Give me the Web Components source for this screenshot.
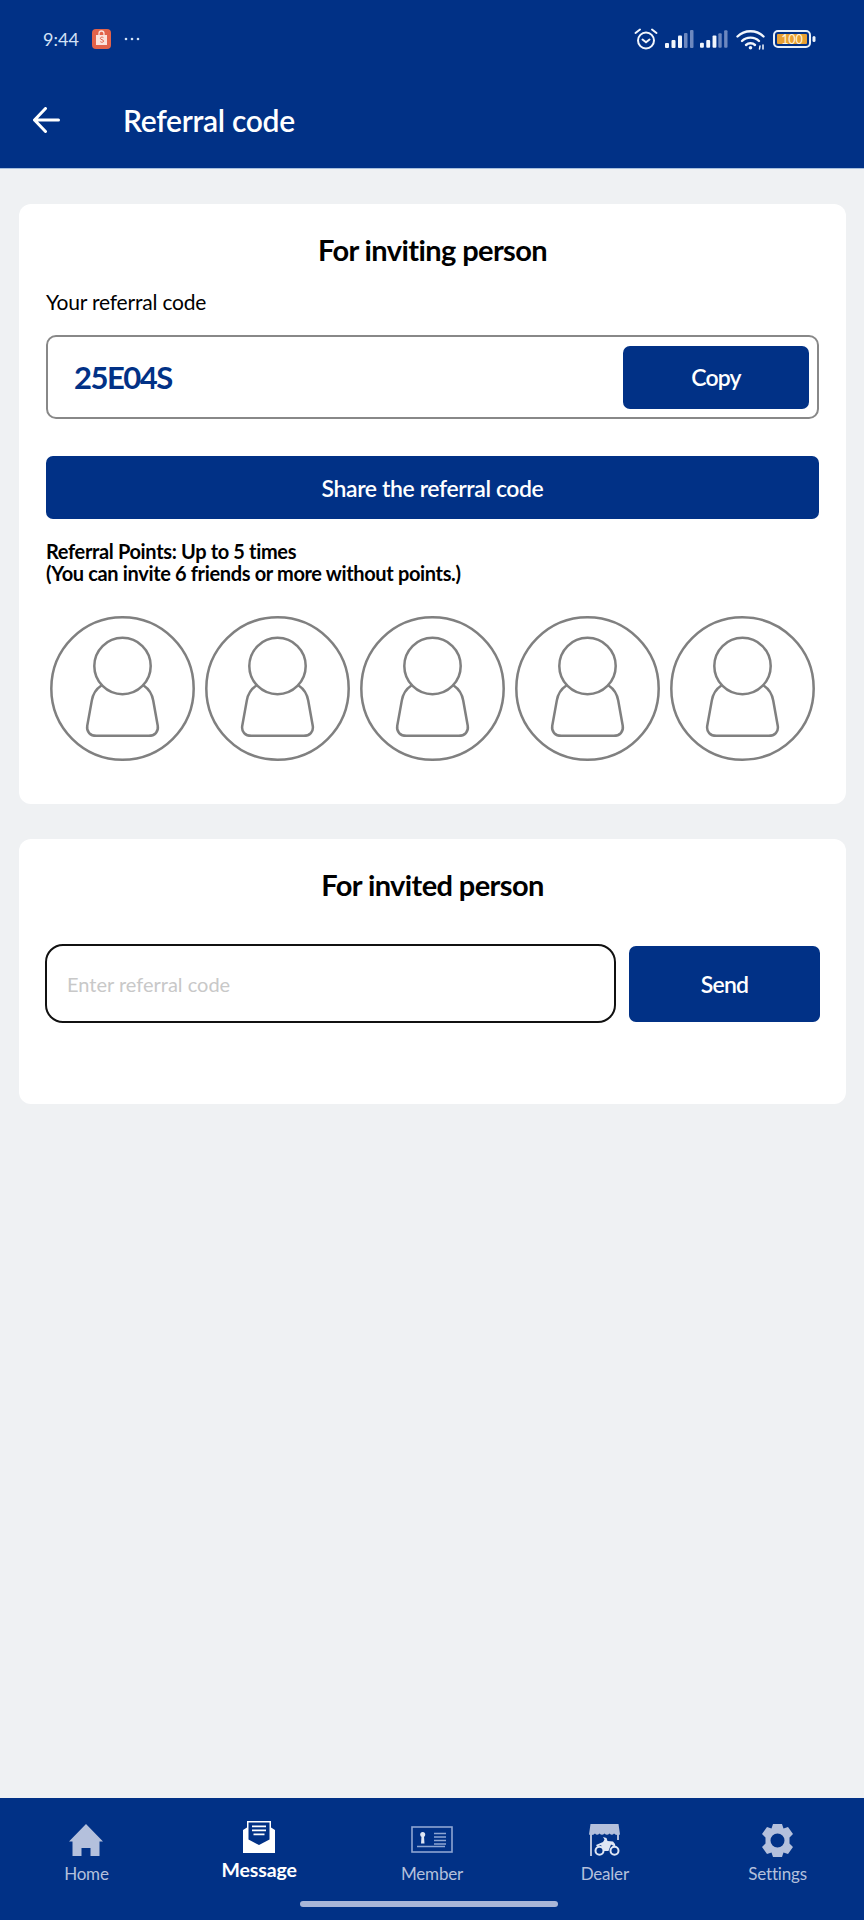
<!DOCTYPE html>
<html>
<head>
<meta charset="utf-8">
<title>Referral code</title>
<style>
  html, body { margin: 0; padding: 0; height: 100%; }
  body {
    width: 864px;
    height: 1920px;
    display: flex;
    flex-direction: column;
    background: #eff1f3;
    font-family: Lato, "Open Sans", sans-serif;
    overflow: hidden;
  }
</style>
</head>
<body>
  <x-app-header title-text="Referral code"></x-app-header>
  <x-page-main>
    <x-inviting-card></x-inviting-card>
    <x-invited-card></x-invited-card>
  </x-page-main>
  <x-bottom-nav></x-bottom-nav>

<script>
const BLUE = '#013186';

class StatusBar extends HTMLElement {
  constructor() {
    super();
    this.attachShadow({ mode: 'open' });
    this.shadowRoot.innerHTML = `
      <style>
        :host { display: flex; align-items: center; height: 24px; padding: 27px 48px 0 43px; color: #d3e2f6; }
        .time { font-size: 18px; line-height: 24px; width: 49px; }
        .dots { margin-left: 13px; display: block; }
        .right { margin-left: auto; display: flex; align-items: center; }
        svg { display: block; }
      </style>
      <span class="time">9:44</span>
      <svg width="19" height="20" viewBox="0 0 19 20">
        <rect width="19" height="20" y="0" rx="4" fill="#e2634a"/>
        <path d="M4 6h11v10H4z" fill="#fbe3dc"/>
        <path d="M7 6V4.500a2.500 2.500 0 0 1 5 0V6" fill="none" stroke="#fbe3dc" stroke-width="1.300"/>
        <path d="M11.400 8.600c-1-.8-3-.6-3 .8 0 1.600 3.200 1 3.200 2.700 0 1.400-2.200 1.500-3.300.6" fill="none" stroke="#e2634a" stroke-width="1"/>
      </svg>
      <svg class="dots" width="16" height="4" viewBox="0 0 16 4" fill="#d3e2f6">
        <circle cx="2" cy="2" r="1.300"/><circle cx="8" cy="2" r="1.300"/><circle cx="14" cy="2" r="1.300"/>
      </svg>
      <div class="right">
        <svg width="24" height="22" viewBox="0 0 24 22" fill="none" stroke="#f2f6fc" stroke-width="2" stroke-linecap="round">
          <circle cx="12" cy="12.500" r="8"/>
          <path d="M8.500 11.500l3.500 2.800 3.500-2.800"/>
          <path d="M1.500 5L6 1.500M22.500 5L18 1.500"/>
        </svg>
        <svg style="margin-left:7px" width="29" height="18" viewBox="0 0 29 18">
          <rect x="0" y="13" width="4" height="5" rx="1" fill="#f2f6fc"/>
          <rect x="6.500" y="10" width="4" height="8" rx="1" fill="#f2f6fc"/>
          <rect x="13" y="5.500" width="4" height="12.500" rx="1" fill="#f2f6fc"/>
          <rect x="19" y="3" width="3.500" height="15" rx="1" fill="#6d88bf"/>
          <rect x="25" y="0" width="3.500" height="18" rx="1" fill="#6d88bf"/>
        </svg>
        <svg style="margin-left:6px" width="28" height="18" viewBox="0 0 29 18">
          <rect x="0" y="13" width="4" height="5" rx="1" fill="#f2f6fc"/>
          <rect x="6.500" y="10" width="4" height="8" rx="1" fill="#f2f6fc"/>
          <rect x="13" y="5.500" width="4" height="12.500" rx="1" fill="#f2f6fc"/>
          <rect x="19" y="3" width="3.500" height="15" rx="1" fill="#6d88bf"/>
          <rect x="25" y="0" width="3.500" height="18" rx="1" fill="#6d88bf"/>
        </svg>
        <svg style="margin-left:8px" width="29" height="21" viewBox="0 0 29 21" fill="none" stroke="#f2f6fc" stroke-width="2.400" stroke-linecap="round">
          <path d="M1.500 7.500C8.500 .5 20.500 .5 27.500 7.500"/>
          <path d="M6 12C10.500 7.500 18.500 7.500 23 12"/>
          <path d="M10 16c2.500-2.300 6.500-2.300 9 0"/>
          <circle cx="14.500" cy="18.800" r="1.800" fill="#f2f6fc" stroke="none"/>
          <path d="M23.500 20l.5-3M27 20v-4" stroke-width="1.500"/>
        </svg>
        <svg style="margin-left:8px" width="43" height="18" viewBox="0 0 43 18">
          <rect x="1" y="1" width="36" height="16" rx="4" fill="none" stroke="#eaf1fa" stroke-width="2"/>
          <rect x="4" y="4" width="30" height="10" rx="1" fill="#e8a033"/>
          <text x="19" y="13.500" text-anchor="middle" font-family="Lato, sans-serif" font-size="12.500" fill="#fff3d6">100</text>
          <rect x="39.500" y="6" width="3" height="6" rx="1.500" fill="#eaf1fa"/>
        </svg>
      </div>`;
  }
}
customElements.define('x-status-bar', StatusBar);

class AppHeader extends HTMLElement {
  constructor() {
    super();
    this.attachShadow({ mode: 'open' });
    this.shadowRoot.innerHTML = `
      <style>
        :host { display: block; height: 168px; background: ${BLUE}; border-bottom: 1px solid #a6bedd; color: #fff; }
        .bar { display: flex; align-items: center; height: 50px; margin-top: 44px; padding-left: 33px; }
        .back { display: block; }
        h1 { margin: 0 0 0 63px; font-size: 30px; font-weight: 600; letter-spacing: -.3px; line-height: 50px; }
      </style>
      <x-status-bar></x-status-bar>
      <div class="bar">
        <svg class="back" width="27" height="26" viewBox="0 0 27 26" fill="none" stroke="#fff" stroke-width="3" stroke-linecap="round" stroke-linejoin="round">
          <path d="M1.500 13H25.500M12.500 1.500L1.500 13l11 11.500"/>
        </svg>
        <h1></h1>
      </div>`;
    this.shadowRoot.querySelector('h1').textContent = this.getAttribute('title-text');
  }
}
customElements.define('x-app-header', AppHeader);

class PageMain extends HTMLElement {
  constructor() {
    super();
    this.attachShadow({ mode: 'open' });
    this.shadowRoot.innerHTML = `
      <style>
        :host { display: flex; flex-direction: column; gap: 35px; flex: 1; padding: 35px 18px 0 19px; }
      </style>
      <slot></slot>`;
  }
}
customElements.define('x-page-main', PageMain);

class BlueButton extends HTMLElement {
  constructor() {
    super();
    this.attachShadow({ mode: 'open' });
    this.shadowRoot.innerHTML = `
      <style>
        :host { display: flex; align-items: center; justify-content: center; background: ${BLUE}; color: #fff; border-radius: 7px; font-size: var(--btn-size, 23px); letter-spacing: var(--btn-spacing, -.8px); font-weight: 600; cursor: pointer; }
      </style>
      <slot></slot>`;
  }
}
customElements.define('x-blue-button', BlueButton);

class AvatarSlot extends HTMLElement {
  constructor() {
    super();
    this.attachShadow({ mode: 'open' });
    this.shadowRoot.innerHTML = `
      <style>
        :host { display: block; width: 145px; height: 145px; }
        svg { display: block; }
      </style>
      <svg width="145" height="145" viewBox="0 0 144 144" fill="none" stroke="#808080" stroke-width="2.500" stroke-linecap="round">
        <circle cx="72" cy="72" r="70.700"/>
        <circle cx="72" cy="49.700" r="28"/>
        <path d="M51 69C45 73 42.500 78 41.500 84L37 109C36 115 40 119 46 119H98C104 119 108 115 107 109L102.500 84C101.500 78 99 73 93 69"/>
      </svg>`;
  }
}
customElements.define('x-avatar-slot', AvatarSlot);

class InvitingCard extends HTMLElement {
  constructor() {
    super();
    this.attachShadow({ mode: 'open' });
    this.shadowRoot.innerHTML = `
      <style>
        :host { display: block; background: #fff; border-radius: 12px; padding: 28px 27px 43px; color: #000; }
        h2 { margin: 0; font-size: 29px; line-height: 36px; font-weight: 700; letter-spacing: -.6px; text-align: center; }
        .label { margin-top: 20px; font-size: 21px; line-height: 28px; letter-spacing: -.2px; }
        .code-box { box-sizing: border-box; display: flex; align-items: center; justify-content: space-between; height: 84px; margin-top: 19px; padding: 0 8px 0 26px; border: 2px solid #888; border-radius: 10px; }
        .code { font-size: 31px; font-weight: 700; letter-spacing: -1.5px; color: ${BLUE}; }
        .copy { width: 186px; height: 63px; }
        .share { height: 63px; margin-top: 37px; --btn-size: 23px; --btn-spacing: -.4px; }
        .points { margin-top: 21px; font-size: 20px; line-height: 22px; font-weight: 700; letter-spacing: -.35px; }
        .avatars { display: flex; gap: 10px; margin-top: 32px; padding-left: 4px; }
      </style>
      <h2>For inviting person</h2>
      <div class="label">Your referral code</div>
      <div class="code-box">
        <span class="code">25E04S</span>
        <x-blue-button class="copy">Copy</x-blue-button>
      </div>
      <x-blue-button class="share">Share the referral code</x-blue-button>
      <div class="points">Referral Points: Up to 5 times<br>(You can invite 6 friends or more without points.)</div>
      <div class="avatars">
        <x-avatar-slot></x-avatar-slot>
        <x-avatar-slot></x-avatar-slot>
        <x-avatar-slot></x-avatar-slot>
        <x-avatar-slot></x-avatar-slot>
        <x-avatar-slot></x-avatar-slot>
      </div>`;
  }
}
customElements.define('x-inviting-card', InvitingCard);

class InvitedCard extends HTMLElement {
  constructor() {
    super();
    this.attachShadow({ mode: 'open' });
    this.shadowRoot.innerHTML = `
      <style>
        :host { display: block; background: #fff; border-radius: 12px; padding: 28px 26px 81px; color: #000; }
        h2 { margin: 0; font-size: 29px; line-height: 36px; font-weight: 700; letter-spacing: -.6px; text-align: center; }
        .row { display: flex; align-items: center; gap: 13px; margin-top: 41px; }
        .field { box-sizing: border-box; width: 571px; height: 79px; padding: 0 20px; border: 2px solid #111; border-radius: 18px; font: inherit; font-size: 20px; outline: none; background: #fff; }
        .field::placeholder { color: #c8c8c8; opacity: 1; }
        .send { width: 191px; height: 76px; }
      </style>
      <h2>For invited person</h2>
      <div class="row">
        <input class="field" type="text" placeholder="Enter referral code">
        <x-blue-button class="send">Send</x-blue-button>
      </div>`;
  }
}
customElements.define('x-invited-card', InvitedCard);

class NavItem extends HTMLElement {
  constructor() {
    super();
    this.attachShadow({ mode: 'open' });
    const active = this.hasAttribute('active');
    this.shadowRoot.innerHTML = `
      <style>
        :host { display: flex; flex-direction: column; align-items: center; flex: 1; color: #b4c0dc; font-size: 17px; letter-spacing: -.2px; }
        :host([active]) { color: #fff; font-size: 19.500px; font-weight: 700; letter-spacing: -.1px; }
        .icon { display: flex; align-items: flex-end; justify-content: center; height: 34px; margin-top: ${active ? 21 : 24}px; }
        .text { line-height: 24px; margin-top: ${active ? 5 : 6}px; }
      </style>
      <div class="icon"><slot name="icon"></slot></div>
      <div class="text"><slot></slot></div>`;
  }
}
customElements.define('x-nav-item', NavItem);

class BottomNav extends HTMLElement {
  constructor() {
    super();
    this.attachShadow({ mode: 'open' });
    this.shadowRoot.innerHTML = `
      <style>
        :host { display: block; height: 122px; background: ${BLUE}; }
        .items { display: flex; height: 103px; }
        .handle { width: 258px; height: 6px; margin: 0 auto; border-radius: 3px; background: #a9b6d8; transform: translateX(-3px); }
        svg { display: block; }
      </style>
      <div class="items">
        <x-nav-item>
          <svg slot="icon" width="34" height="32" viewBox="0 0 34 32" fill="#b4c0dc">
            <path d="M17 0L34 17.500H30.500V32H21.500V24H12.500V32H3.500V17.500H0Z"/>
          </svg>
          Home
        </x-nav-item>
        <x-nav-item active>
          <svg slot="icon" width="32" height="32" viewBox="0 0 32 32">
            <path fill="#fff" d="M4 0H28V6.500L32 9V32H0V9L4 6.500Z"/>
            <path fill="${BLUE}" d="M5.500 1.500H26.500V18.500L16 24L5.500 18.500Z"/>
            <path fill="#fff" d="M9 4.500H23V6.300H9ZM9 8.500H23V10.300H9ZM10.500 12.500H21.500V14.300H10.500Z"/>
          </svg>
          Message
        </x-nav-item>
        <x-nav-item>
          <svg slot="icon" style="margin-bottom:3px" width="42" height="27" viewBox="0 0 42 27" fill="none" stroke="#8ea6d3" stroke-width="1.600">
            <rect x="1" y="1" width="40" height="25"/>
            <path d="M6 20.500H34M23 7.500H35M23 11H35M23 14.500H35M23 18H35" stroke-width="1.300"/>
            <circle cx="11.700" cy="8.500" r="2.500" fill="#dfe6f4" stroke="none"/>
            <path d="M10.500 10H13L13.500 17.500H10Z" fill="#dfe6f4" stroke="none"/>
          </svg>
          Member
        </x-nav-item>
        <x-nav-item>
          <svg slot="icon" width="31" height="32" viewBox="0 0 31 32">
            <path fill="#b4c0dc" d="M1.500 0H29.500L31 10.500Q27.500 12 25 9.500Q23 12 20.500 9.500Q18 12 15.500 9.500Q13 12 10.500 9.500Q8 12 6 9.500Q3.500 12 0 10.500Z"/>
            <rect x="1" y="10" width="2" height="22" fill="#b4c0dc"/>
            <rect x="28" y="10" width="2" height="6" fill="#b4c0dc"/>
            <g fill="none" stroke="#dfe6f4" stroke-width="2">
              <circle cx="10.500" cy="26.700" r="4"/>
              <circle cx="25.500" cy="26.700" r="4"/>
            </g>
            <path fill="#dfe6f4" d="M14 13L17.500 14L18.500 17L24 17.500L26 20L26.500 23L22 20.500L19.500 27H15L12 21L8 22.500L7 21L14 18L15.500 15.500Z"/>
          </svg>
          Dealer
        </x-nav-item>
        <x-nav-item>
          <svg slot="icon" style="margin-bottom:-1px" width="35" height="33" viewBox="0 0 35 33">
            <path fill="#b4c0dc" fill-rule="evenodd" d="M13 0H22L23.500 4.500L28 3L33 10L29.500 13.500V19.500L33 23L28 30L23.500 28.500L22 33H13L11.500 28.500L7 30L2 23L5.500 19.500V13.500L2 10L7 3L11.500 4.500ZM17.500 9.500A7 7 0 1 0 17.500 23.500A7 7 0 1 0 17.500 9.500Z"/>
          </svg>
          Settings
        </x-nav-item>
      </div>
      <div class="handle"></div>`;
  }
}
customElements.define('x-bottom-nav', BottomNav);
</script>
</body>
</html>
